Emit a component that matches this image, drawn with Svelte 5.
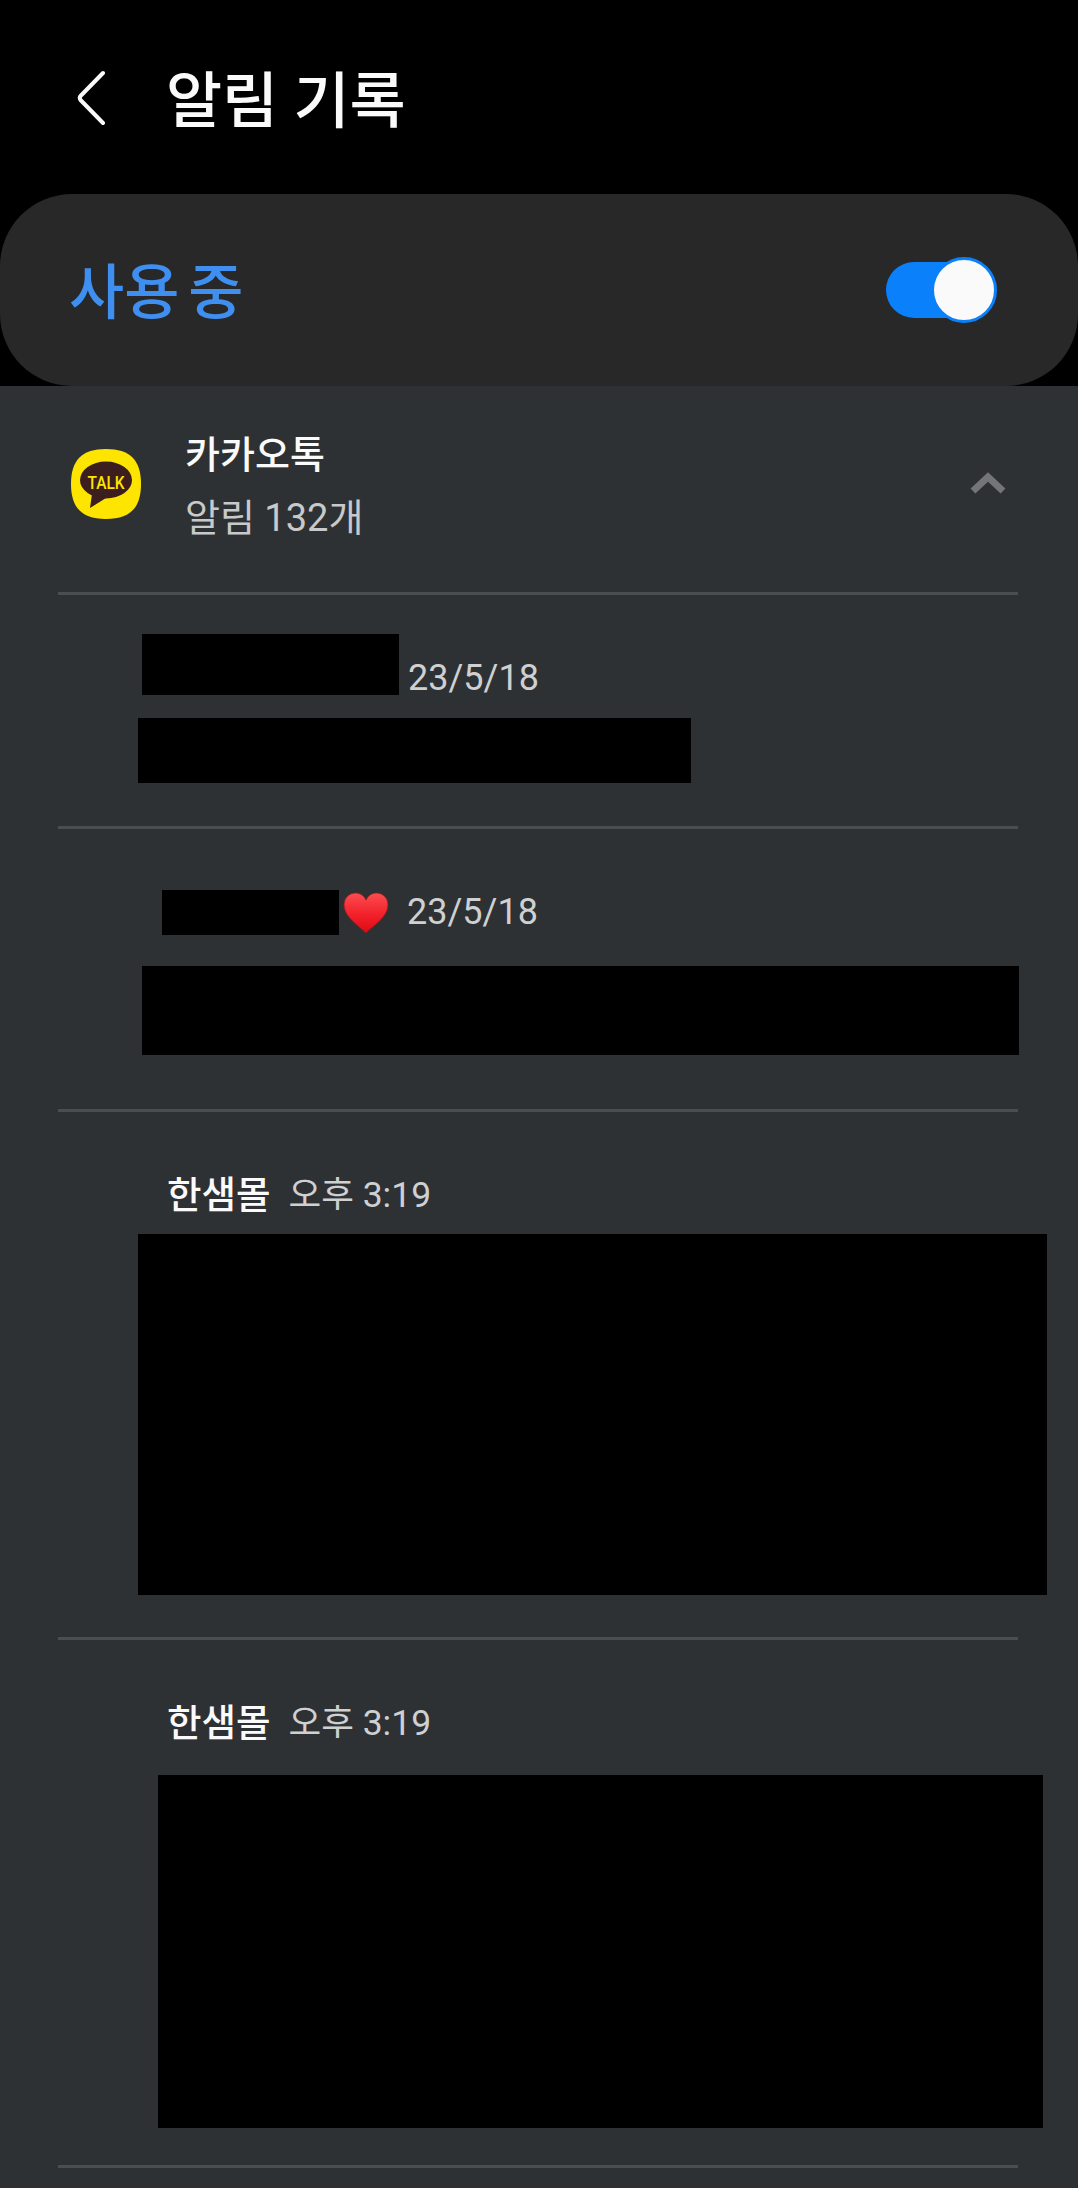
<script>
  const rows = [
    { id: 'one', name: null, time: '23/5/18' },
    { id: 'two', name: null, heart: true, time: '23/5/18' },
    { id: 'three', name: '한샘몰', time: '오후 3:19' },
    { id: 'four', name: '한샘몰', time: '오후 3:19' },
  ]
</script>

<div class="screen">
  <header class="top">
    <svg class="back" width="30" height="58" viewBox="0 0 30 58" fill="none">
      <path d="M26 4 L3.500 27 Q2 29 3.500 31 L26 54" stroke="#fafafa" stroke-width="4" stroke-linecap="round" stroke-linejoin="round" />
    </svg>
    <h1>알림 기록</h1>
  </header>

  <div class="status">
    <span class="status-label">사용 중</span>
    <div class="toggle"><div class="thumb"></div></div>
  </div>

  <main class="list">
    <div class="app-row">
      <svg class="app-icon" width="72" height="72" viewBox="0 0 72 72">
        <path d="M36 1 C60 1 71 12 71 36 C71 60 60 71 36 71 C12 71 1 60 1 36 C1 12 12 1 36 1 Z" fill="#fee500" />
        <ellipse cx="36" cy="32" rx="26" ry="18.500" fill="#3c1e1e" />
        <path d="M22 46 L20 60 L36 50 Z" fill="#3c1e1e" />
        <text x="36" y="41" text-anchor="middle" textLength="37" lengthAdjust="spacingAndGlyphs" class="talk">TALK</text>
      </svg>
      <div class="app-text">
        <div class="app-name">카카오톡</div>
        <div class="app-count">알림 132개</div>
      </div>
      <svg class="chevron" width="38" height="24" viewBox="0 0 38 24" fill="none">
        <path d="M4 20 L19 6 L34 20" stroke="#737577" stroke-width="7" />
      </svg>
    </div>
    <div class="divider"></div>

    {#each rows as row}
      <section class="row {row.id}">
        <div class="head">
          {#if row.name}
            <span class="name">{row.name}</span>
          {:else}
            <div class="redact name-block"></div>
          {/if}
          {#if row.heart}
            <svg class="heart" width="46" height="42" viewBox="0 0 46 42">
              <defs>
                <linearGradient id="heartFill" x1="0" y1="0" x2="0" y2="1">
                  <stop offset="0" stop-color="#fb4d50" />
                  <stop offset="0.55" stop-color="#f2202a" />
                  <stop offset="1" stop-color="#dd0a14" />
                </linearGradient>
              </defs>
              <path d="M23 41 C16 34 1 25 1 13 C1 5 7 1 12.500 1 C17 1 21 3.500 23 8 C25 3.500 29 1 33.500 1 C39 1 45 5 45 13 C45 25 30 34 23 41 Z" fill="url(#heartFill)" stroke="#8e1d20" stroke-width="0.8" />
            </svg>
          {/if}
          <span class="time">{row.time}</span>
        </div>
        <div class="redact body-block"></div>
      </section>
      <div class="divider"></div>
    {/each}
  </main>
</div>

<style>
  :global(body) {
    background: #000;
  }

  .screen {
    width: 1078px;
    height: 2188px;
    overflow: hidden;
    background: #000;
    font-family: Roboto, 'Noto Sans CJK KR', sans-serif;
  }

  .top {
    height: 194px;
    box-sizing: border-box;
    padding: 69px 0 0 77px;
    display: flex;
    align-items: flex-start;
  }

  .back {
    flex: none;
  }

  h1 {
    margin: -5px 0 0 59px;
    font-family: Roboto, 'Noto Sans CJK KR', sans-serif;
    font-size: 61px;
    font-weight: 500;
    line-height: 76px;
    color: #fafafa;
  }

  .status {
    height: 192px;
    box-sizing: border-box;
    padding: 0 82px 0 69px;
    display: flex;
    align-items: center;
    justify-content: space-between;
    background: #282828;
    border-radius: 72px;
  }

  .status-label {
    padding-top: 8px;
    font-size: 60px;
    font-weight: 500;
    word-spacing: -6px;
    color: #3f8ff0;
    line-height: 76px;
  }

  .toggle {
    position: relative;
    width: 110px;
    height: 56px;
    border-radius: 28px;
    background: #0a80fb;
  }

  .thumb {
    position: absolute;
    top: -5px;
    right: -1px;
    width: 60px;
    height: 60px;
    border: 3px solid #0a80fb;
    border-radius: 50%;
    background: #fafafa;
  }

  .list {
    height: 1802px;
    background: #2e3134;
  }

  .app-row {
    height: 206px;
    box-sizing: border-box;
    padding: 0 71px 0 70px;
    display: flex;
    align-items: center;
  }

  .app-icon {
    flex: none;
    margin-bottom: 10px;
  }

  .chevron {
    flex: none;
    margin-bottom: 12px;
  }

  .talk {
    font-family: Roboto, sans-serif;
    font-size: 19px;
    font-weight: 500;
    fill: #fee500;
  }

  .app-text {
    flex: 1;
    margin: 0 0 6px 43px;
  }

  .app-name {
    font-size: 38px;
    font-weight: 500;
    line-height: 50px;
    color: #fafafa;
  }

  .app-count {
    margin-top: 13px;
    font-size: 38px;
    line-height: 50px;
    color: #c8c9ca;
  }

  .divider {
    height: 3px;
    margin: 0 60px 0 58px;
    background: #4b4e50;
  }

  .row {
    box-sizing: border-box;
  }

  .head {
    display: flex;
    align-items: center;
  }

  .redact {
    background: #000;
  }

  .name {
    font-size: 37.500px;
    font-weight: 500;
    line-height: 50px;
    color: #fafafa;
  }

  .time {
    font-size: 36px;
    line-height: 44px;
    color: #cfd0d1;
  }

  .one {
    height: 231px;
    padding-top: 39px;
  }

  .one .head {
    align-items: flex-end;
    padding-left: 142px;
  }

  .one .name-block {
    width: 257px;
    height: 61px;
    margin-right: 9px;
  }

  .one .time {
    margin-bottom: -5px;
  }

  .one .body-block {
    width: 553px;
    height: 65px;
    margin: 23px 0 0 138px;
  }

  .two {
    height: 280px;
    padding-top: 61px;
  }

  .two .head {
    padding-left: 162px;
  }

  .two .name-block {
    width: 177px;
    height: 45px;
  }

  .two .time {
    margin-top: -2px;
  }

  .heart {
    margin: 0 18px 0 4px;
  }

  .two .body-block {
    width: 877px;
    height: 89px;
    margin: 31px 0 0 142px;
  }

  .three,
  .four {
    height: 525px;
    padding-top: 58px;
    padding-left: 167px;
  }

  .three .name,
  .four .name {
    margin-right: 18px;
  }

  .three .time,
  .four .time {
    font-size: 35.500px;
  }

  .three .body-block {
    width: 909px;
    height: 361px;
    margin: 14px 0 0 -29px;
  }

  .four .body-block {
    width: 885px;
    height: 353px;
    margin: 27px 0 0 -9px;
  }
</style>
